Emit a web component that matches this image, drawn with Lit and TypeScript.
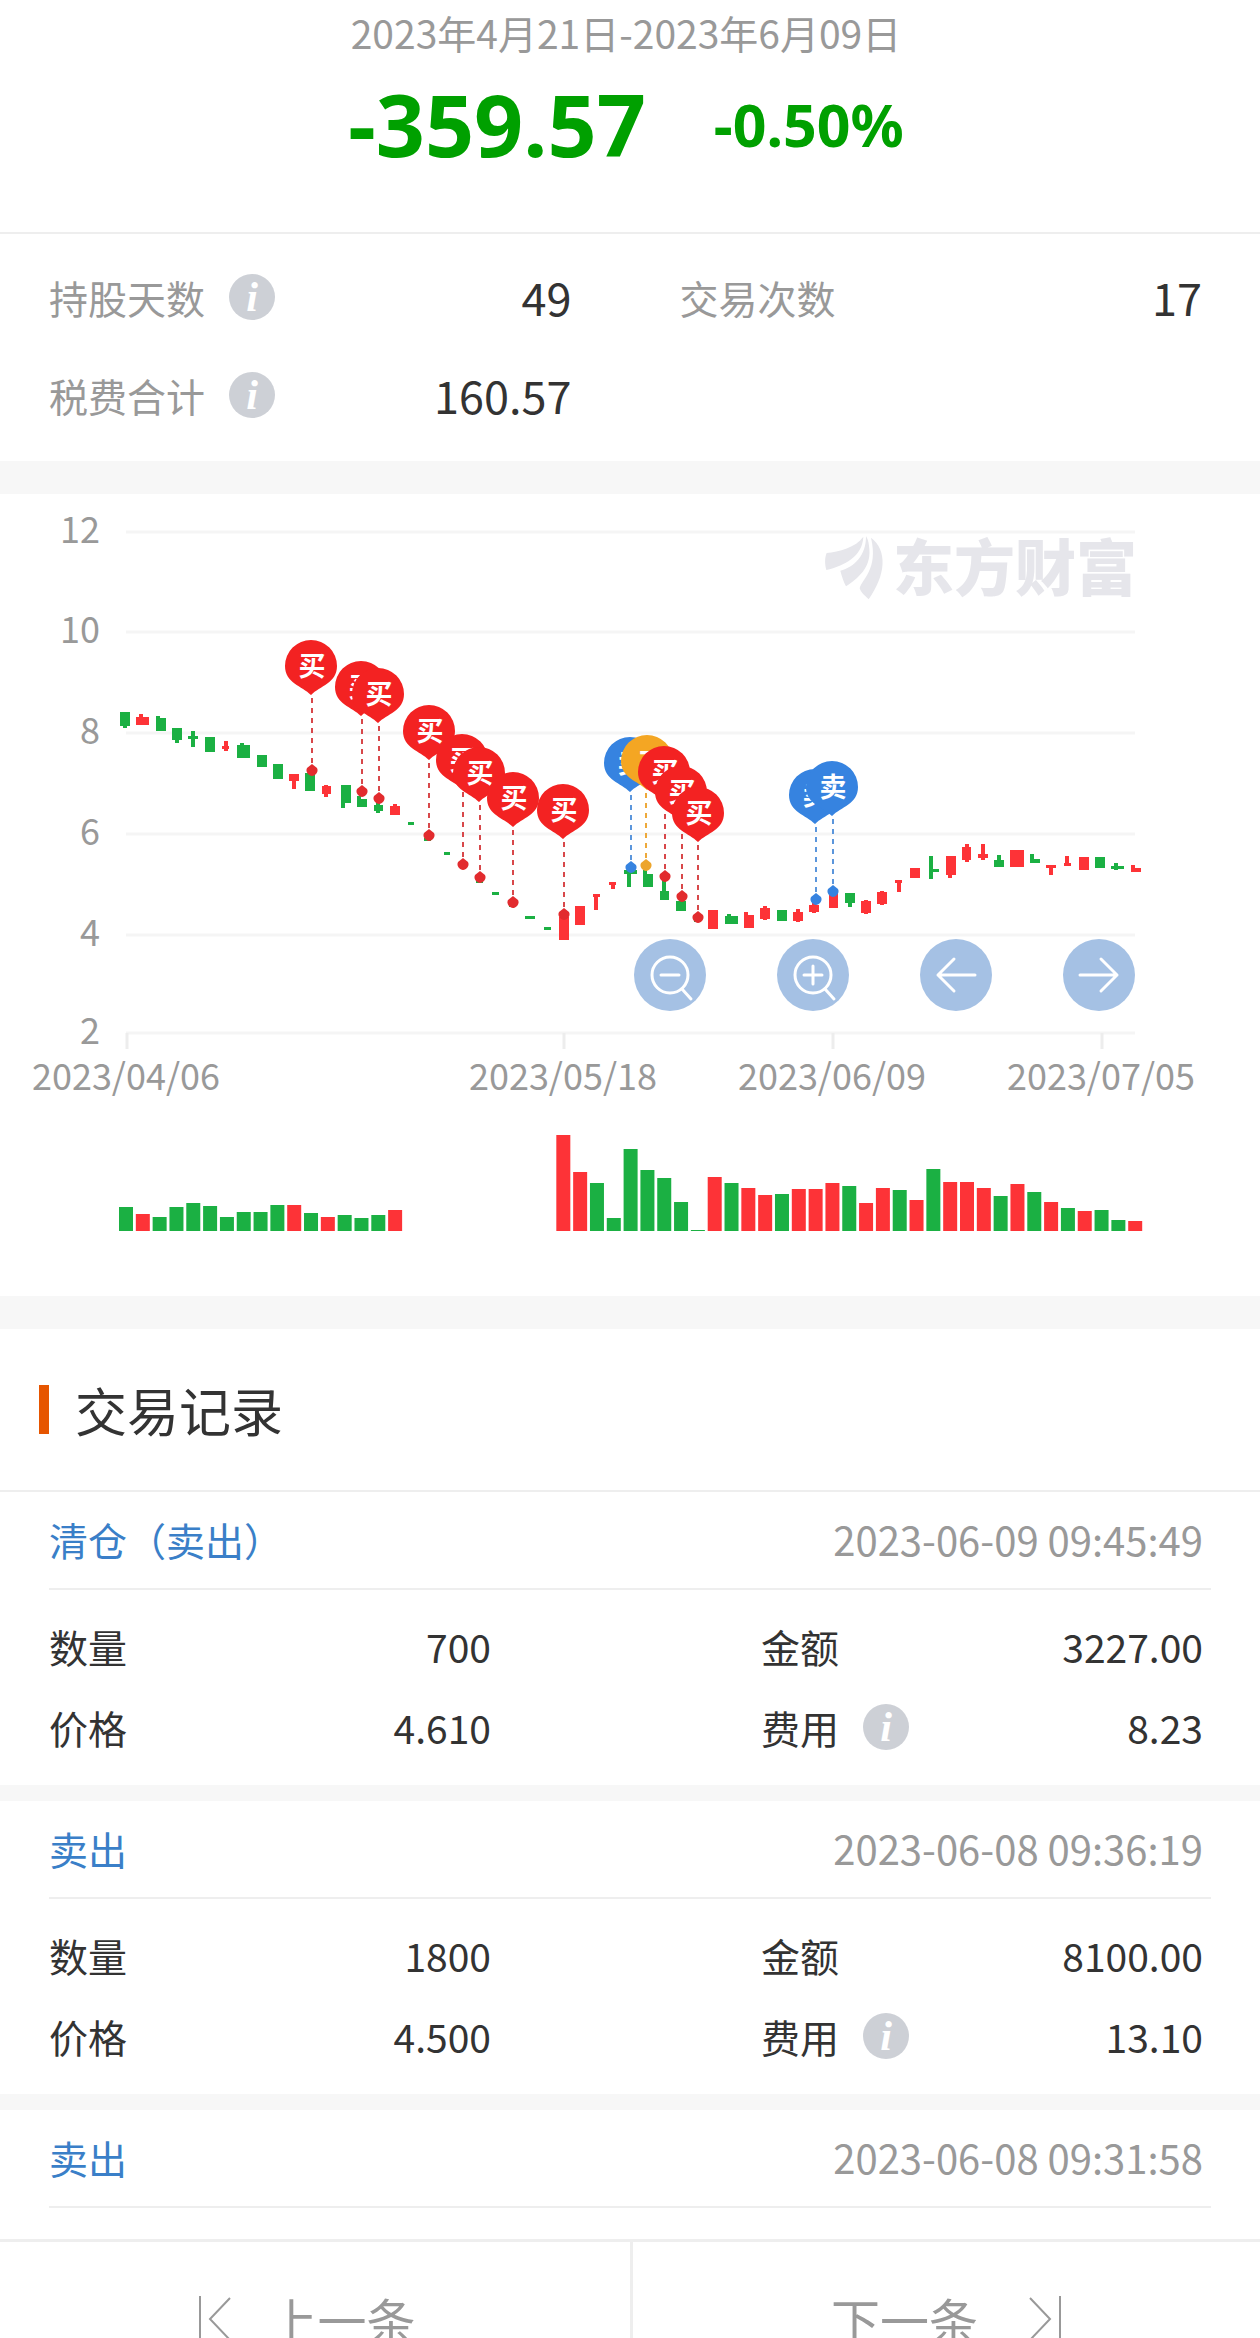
import { LitElement, css, html, svg, nothing } from "lit";
import { customElement, property } from "lit/decorators.js";

type Tone = "r" | "g";
/** tone, body left, top, right, bottom, then optionally wick centre, top, bottom */
type Candle = [Tone, number, number, number, number, number?, number?, number?];
type Marker = { x: number; y: number; cx: number; kind: "buy" | "sell" | "mixed" };

const CANDLES: Candle[] = [
  ["g", 120, 712, 130, 726, 125, 712, 728],
  ["r", 136, 717, 149, 725, 141, 714, 725],
  ["g", 156, 718, 166, 731, 158, 716, 731],
  ["g", 172, 728, 182, 740, 177, 728, 743],
  ["g", 188, 736, 198, 739, 193, 731, 747],
  ["g", 205, 737, 215, 752],
  ["r", 222, 746, 229, 749, 226, 741, 751],
  ["g", 237, 745, 250, 758, 242, 743, 758],
  ["g", 257, 755, 267, 767],
  ["g", 273, 764, 283, 779],
  ["r", 289, 774, 299, 781, 294, 774, 789],
  ["g", 305, 773, 315, 791],
  ["r", 322, 786, 331, 794, 326, 785, 797],
  ["g", 341, 785, 351, 803, 343, 785, 808],
  ["g", 357, 799, 367, 807, 359, 796, 807],
  ["g", 374, 805, 383, 811, 378, 802, 813],
  ["r", 390, 806, 400, 815, 395, 804, 815],
  ["g", 408, 822, 414, 825],
  ["g", 424, 838, 431, 841],
  ["g", 444, 852, 450, 855],
  ["g", 460, 866, 466, 869],
  ["g", 476, 880, 483, 883],
  ["g", 492, 892, 499, 895],
  ["g", 509, 904, 515, 907],
  ["g", 525, 916, 535, 919],
  ["g", 544, 927, 551, 930],
  ["r", 559, 917, 569, 940],
  ["r", 575, 906, 585, 925],
  ["r", 593, 894, 600, 897, 596, 894, 910],
  ["r", 609, 882, 616, 885, 613, 882, 889],
  ["g", 624, 870, 637, 874, 629, 870, 887],
  ["g", 643, 874, 653, 887, 645, 870, 887],
  ["g", 660, 891, 669, 900, 664, 880, 900],
  ["g", 676, 901, 686, 911],
  ["g", 694, 919, 701, 922],
  ["r", 708, 910, 718, 929],
  ["g", 725, 916, 738, 924, 729, 914, 924],
  ["r", 744, 915, 754, 928, 746, 912, 928],
  ["r", 760, 908, 770, 919, 765, 906, 920],
  ["g", 777, 910, 787, 921],
  ["r", 793, 912, 803, 921, 798, 909, 922],
  ["r", 809, 905, 819, 912, 814, 903, 913],
  ["r", 829, 893, 838, 908],
  ["g", 845, 893, 855, 903, 850, 893, 907],
  ["r", 861, 901, 871, 913, 866, 900, 914],
  ["r", 877, 892, 887, 904, 882, 891, 905],
  ["r", 895, 880, 902, 883, 899, 880, 892],
  ["r", 910, 868, 920, 878],
  ["g", 931, 869, 939, 872, 931, 856, 879],
  ["r", 946, 856, 956, 875, 950, 856, 878],
  ["r", 962, 847, 971, 860, 967, 844, 862],
  ["r", 978, 854, 988, 858, 983, 844, 860],
  ["g", 994, 860, 1004, 867, 999, 855, 867],
  ["r", 1010, 850, 1024, 867],
  ["g", 1030, 859, 1040, 863, 1032, 854, 863],
  ["r", 1046, 865, 1056, 868, 1051, 865, 875],
  ["r", 1064, 863, 1071, 866, 1067, 856, 866],
  ["r", 1079, 857, 1089, 870],
  ["g", 1095, 857, 1105, 868],
  ["g", 1111, 866, 1124, 869, 1116, 863, 870],
  ["r", 1131, 868, 1141, 872, 1133, 865, 872],
];

/** null marks a day without volume */
const VOLUMES: (number | null)[] = [
  24, 17, 14, 24, 28, 25, 14, 19, 19, 26, 26, 18, 14, 16, 13, 16, 21,
  null, null, null, null, null, null, null, null, null,
  96, 59, 48, 13, 82, 61, 53, 29, 1, 54, 48, 43, 36, 37, 42, 42, 48, 45,
  28, 43, 41, 31, 62, 49, 49, 43, 35, 47, 39, 29, 23, 20, 21, 11, 10,
];
const VOLUME_TONES =
  "grggggggggrgrgggr" + "ggggggggg" + "rrgggggggrgrrgrrrgrrgrgrrrgrgrgrggr";

const MARKERS: Marker[] = [
  { x: 312, y: 770, cx: 311, kind: "buy" },
  { x: 362, y: 791, cx: 361, kind: "buy" },
  { x: 379, y: 798, cx: 378, kind: "buy" },
  { x: 429, y: 835, cx: 429, kind: "buy" },
  { x: 463, y: 864, cx: 462, kind: "buy" },
  { x: 480, y: 877, cx: 479, kind: "buy" },
  { x: 513, y: 902, cx: 513, kind: "buy" },
  { x: 564, y: 914, cx: 563, kind: "buy" },
  { x: 631, y: 867, cx: 630, kind: "sell" },
  { x: 646, y: 865, cx: 647, kind: "mixed" },
  { x: 665, y: 876, cx: 664, kind: "buy" },
  { x: 682, y: 896, cx: 681, kind: "buy" },
  { x: 698, y: 917, cx: 698, kind: "buy" },
  { x: 816, y: 899, cx: 815, kind: "sell" },
  { x: 833, y: 891, cx: 832, kind: "sell" },
];
const MARKER_TEXT = { buy: "买", sell: "卖", mixed: "T" };

const LEVELS: [number, number][] = [
  [12, 532], [10, 632], [8, 733], [6, 834], [4, 935], [2, 1033],
];
const DAYS: [string, number][] = [
  ["2023/04/06", 126], ["2023/05/18", 563], ["2023/06/09", 832], ["2023/07/05", 1101],
];

@customElement("info-button")
class InfoButton extends LitElement {
  @property() label = "";

  static styles = css`
    :host { display: block; flex: none; }
    .info {
      display: block; width: 46px; height: 46px; padding: 0; border: 0;
      border-radius: 50%; background: #cdd0d6; cursor: pointer;
    }
    .icon { display: block; width: 46px; height: 46px; }
    .glyph {
      font: italic bold 42px "Liberation Serif", serif; fill: #fff; text-anchor: middle;
    }
  `;

  render() {
    return html`<button class="info" type="button" aria-label=${this.label}>
      <svg class="icon" viewBox="0 0 46 46" aria-hidden="true">
        <text class="glyph" x="23" y="37">i</text>
      </svg>
    </button>`;
  }
}

@customElement("trade-chart")
class TradeChart extends LitElement {
  static styles = css`
    :host { display: block; position: relative; }
    .plot {
      display: block; width: 100%; height: auto;
      font-family: "Noto Sans CJK SC", sans-serif;
    }
    .grid { stroke: #f5f5f5; stroke-width: 3; }
    .tick { stroke: #ededed; stroke-width: 3; }
    .axis { font-size: 36px; fill: #999; }
    .level { text-anchor: end; }
    .day { text-anchor: middle; }
    .brand { fill: #e6e6eb; }
    .brand-name { font: 900 61px "Noto Sans CJK SC", sans-serif; }
    .r { fill: #fd3337; }
    .g { fill: #1bb043; }
    .lead { stroke-width: 2; stroke-dasharray: 5 5; }
    .buy .lead { stroke: #d8474a; }
    .sell .lead { stroke: #5b96dc; }
    .mixed .lead { stroke: #eda93a; }
    .buy .dot { fill: #e22b2e; }
    .sell .dot { fill: #3683e0; }
    .mixed .dot { fill: #eda52c; }
    .buy .pin { fill: #f32222; }
    .sell .pin { fill: #3683e0; }
    .mixed .pin { fill: #f4a623; }
    .pin-text { font-size: 27px; font-weight: 700; fill: #fff; text-anchor: middle; }
    .tools {
      position: absolute; right: 9.9%; top: 55.5%;
      display: flex; gap: 71px;
    }
    .tool {
      width: 72px; height: 72px; padding: 0; border: 0; border-radius: 50%;
      background: #a5c1e4; cursor: pointer;
    }
    .tool-icon {
      display: block; width: 72px; height: 72px; fill: none; stroke: #fff;
      stroke-width: 3; stroke-linecap: round; stroke-linejoin: round;
    }
  `;

  private candle([tone, x1, y1, x2, y2, wx, w1, w2]: Candle) {
    return svg`<g class=${tone}>
      <rect x=${x1} y=${y1} width=${x2 - x1} height=${y2 - y1}></rect>
      ${wx === undefined ? nothing
        : svg`<rect x=${wx - 2} y=${w1} width="4" height=${w2! - w1!}></rect>`}
    </g>`;
  }

  private marker({ x, y, cx, kind }: Marker) {
    const cy = y - 104;
    return svg`<g class=${kind}>
      <line class="lead" x1=${x} y1=${y - 72} x2=${x} y2=${y - 4}></line>
      <path class="dot" d="M${x} ${y - 6}l5 4c2 4 -2 8 -5 8c-3 0 -7 -4 -5 -8z"></path>
      <path class="pin" d="M${cx} ${cy - 26}a26 26 0 0 1 26 26c0 17 -17 20 -26 29c-9 -9 -26 -12 -26 -29a26 26 0 0 1 26 -26z"></path>
      <text class="pin-text" x=${cx + 1} y=${cy + 10}>${MARKER_TEXT[kind]}</text>
    </g>`;
  }

  private tool(label: string, shape: unknown) {
    return html`<button class="tool" type="button" aria-label=${label}>
      <svg class="tool-icon" viewBox="-36 -36 72 72" aria-hidden="true">${shape}</svg>
    </button>`;
  }

  render() {
    return html`
      <svg class="plot" viewBox="0 494 1260 802" role="img" aria-label="股价走势与买卖点">
        ${LEVELS.map(([value, y]) => svg`
          <line class="grid" x1="126" x2="1135" y1=${y} y2=${y}></line>
          <text class="axis level" x="100" y=${y + 11}>${value}</text>`)}
        ${DAYS.map(([day, x]) => svg`
          <line class="tick" x1=${x + 1} x2=${x + 1} y1="1033" y2="1049"></line>
          <text class="axis day" x=${x} y="1090">${day}</text>`)}
        <g class="brand">
          <g transform="translate(800 520) scale(.3333)">
            <path d="M190 50C188 108 134 137 79 150C74 132 74 112 80 99C116 96 168 82 190 50z"></path>
            <path d="M198 48C199 105 163 142 121 152C126 170 131 187 138 199C184 168 216 136 207 78C206 64 202 55 198 48z"></path>
            <path d="M213 53C263 92 258 163 206 238C193 226 182 216 179 205C184 179 236 149 213 53z"></path>
          </g>
          <text class="brand-name" x="893" y="591">东方财富</text>
        </g>
        ${CANDLES.map((c) => this.candle(c))}
        ${MARKERS.map((m) => this.marker(m))}
        ${VOLUMES.map((h, i) => h === null ? nothing
          : svg`<rect class=${VOLUME_TONES[i]} x=${119 + i * 16.82} y=${1231 - h} width="14" height=${h}></rect>`)}
      </svg>
      <div class="tools">
        ${this.tool("缩小", svg`<circle r="18"></circle><path d="M-9 0H9M12 14L21 24"></path>`)}
        ${this.tool("放大", svg`<circle r="18"></circle><path d="M-9 0H9M0 -9V9M12 14L21 24"></path>`)}
        ${this.tool("向左", svg`<path d="M19 0H-18M-2 -16L-18 0L-2 16"></path>`)}
        ${this.tool("向右", svg`<path d="M-19 0H18M2 -16L18 0L2 16"></path>`)}
      </div>`;
  }
}

interface Trade {
  action: string; time: string;
  count?: string; amount?: string; price?: string; fee?: string;
}

const TRADES: Trade[] = [
  { action: "清仓（卖出）", time: "2023-06-09 09:45:49", count: "700", amount: "3227.00", price: "4.610", fee: "8.23" },
  { action: "卖出", time: "2023-06-08 09:36:19", count: "1800", amount: "8100.00", price: "4.500", fee: "13.10" },
  { action: "卖出", time: "2023-06-08 09:31:58" },
];

@customElement("app-root")
class AppRoot extends LitElement {
  static styles = css`
    :host {
      display: flex; flex-direction: column; height: 100vh; overflow: hidden;
      background: #fff; color: #333;
      font: 39px/46px "Noto Sans CJK SC", sans-serif;
    }
    .content { flex: 1; min-height: 0; overflow: hidden; }
    .result {
      display: flex; flex-direction: column; align-items: center;
      box-sizing: border-box; height: 234px; padding: 9px 8px 0 0;
      border-bottom: 2px solid #eee;
    }
    .period { color: #999; }
    .profit {
      display: flex; align-items: center; gap: 68px; margin-top: 19px;
      color: #00a000; font-family: "Noto Sans", sans-serif; font-weight: 700; line-height: 100px;
    }
    .profit-amount { font-size: 86px; }
    .profit-rate { font-size: 59px; }
    .summary, .details {
      display: grid; grid-template-columns: 1fr 1fr; margin: 0;
    }
    .summary { column-gap: 108px; row-gap: 52px; padding: 40px 58px 43px 49px; }
    .details { column-gap: 270px; row-gap: 35px; padding: 33px 57px 35px 49px; }
    .field { display: flex; align-items: center; height: 46px; }
    .field-name { display: flex; align-items: center; gap: 24px; }
    .field-value { margin: 0 0 0 auto; }
    .summary .field-name { color: #999; }
    .summary .field-value { font-size: 45px; }
    .band { height: 33px; background: #f7f7f7; }
    .section-title {
      display: flex; align-items: center; gap: 26px; box-sizing: border-box;
      height: 163px; margin: 0; padding-left: 39px;
      border-bottom: 2px solid #eee; font-size: 52px; font-weight: 400;
    }
    .section-title::before { content: ""; width: 10px; height: 49px; background: #e65500; }
    .trade + .trade { border-top: 16px solid #f7f7f7; }
    .trade-head {
      display: flex; align-items: center; justify-content: space-between;
      box-sizing: border-box; height: 98px; margin: 0 49px; padding: 0 8px 2px 0;
      border-bottom: 2px solid #eee;
    }
    .trade-action { margin: 0; color: #3a7fc8; font-size: inherit; font-weight: 400; }
    .trade-time { color: #999; font-size: 40px; }
    .pager {
      display: grid; grid-template-columns: 1fr 1fr; flex: 0 0 99px;
      box-sizing: border-box; overflow: hidden; border-top: 3px solid #eee;
    }
    .page-link {
      display: flex; justify-content: center; align-items: center;
      height: 154px; color: #999; font-size: 49px; text-decoration: none;
    }
    .prev { gap: 36px; padding-right: 16px; }
    .next { gap: 50px; border-left: 3px solid #eee; }
    .page-icon { width: 34px; height: 48px; fill: none; stroke: #999; stroke-width: 2; }
  `;

  private field(name: string, value: string, info = false) {
    return html`<div class="field">
      <dt class="field-name">${name}${info
        ? html`<info-button label="${name}说明"></info-button>` : nothing}</dt>
      <dd class="field-value">${value}</dd>
    </div>`;
  }

  private trade(t: Trade) {
    return html`<article class="trade">
      <header class="trade-head">
        <h3 class="trade-action">${t.action}</h3>
        <time class="trade-time">${t.time}</time>
      </header>
      ${t.count ? html`<dl class="details">
        ${this.field("数量", t.count)}
        ${this.field("金额", t.amount!)}
        ${this.field("价格", t.price!)}
        ${this.field("费用", t.fee!, true)}
      </dl>` : nothing}
    </article>`;
  }

  render() {
    return html`
      <main class="content">
        <section class="result">
          <div class="period">2023年4月21日-2023年6月09日</div>
          <div class="profit">
            <span class="profit-amount">-359.57</span>
            <span class="profit-rate">-0.50%</span>
          </div>
        </section>
        <dl class="summary">
          ${this.field("持股天数", "49", true)}
          ${this.field("交易次数", "17")}
          ${this.field("税费合计", "160.57", true)}
        </dl>
        <div class="band"></div>
        <trade-chart></trade-chart>
        <div class="band"></div>
        <section>
          <h2 class="section-title">交易记录</h2>
          ${TRADES.map((t) => this.trade(t))}
        </section>
      </main>
      <nav class="pager" aria-label="翻页">
        <a class="page-link prev" href="#prev">
          <svg class="page-icon" viewBox="0 0 34 48" aria-hidden="true"><path d="M2 1V47M32 3L12 24L32 45"></path></svg>
          <span>上一条</span>
        </a>
        <a class="page-link next" href="#next">
          <span>下一条</span>
          <svg class="page-icon" viewBox="0 0 34 48" aria-hidden="true"><path d="M32 1V47M2 3L22 24L2 45"></path></svg>
        </a>
      </nav>`;
  }
}
